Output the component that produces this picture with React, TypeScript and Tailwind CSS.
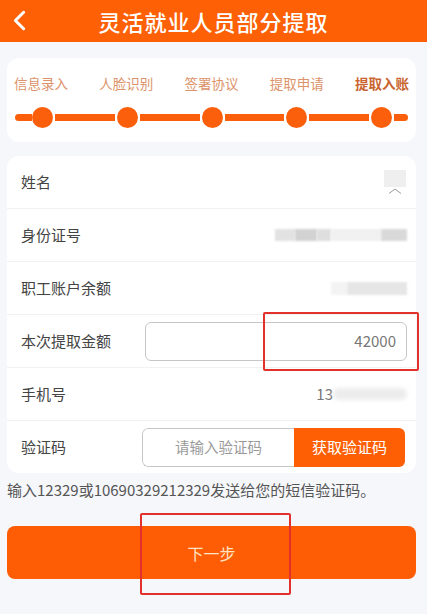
import { ChevronLeft } from 'lucide-react';

const STEPS = ['信息录入', '人脸识别', '签署协议', '提取申请', '提取入账'];

export default function App() {
  return (
    <div
      className="relative min-h-[614px] w-[427px] bg-[#f6f7fb] pb-[20px]"
      style={{ fontFamily: '"Noto Sans CJK SC", "Noto Sans", sans-serif' }}
    >
      {/* Header */}
      <div className="relative flex h-[42px] items-center justify-center bg-[#fe6005]">
        <ChevronLeft
          className="absolute left-[3px] top-[4px] h-[33px] w-[33px] text-white"
          strokeWidth={2.2}
        />
        <h1 className="text-[22px] font-medium leading-none tracking-[1px] text-white">
          灵活就业人员部分提取
        </h1>
      </div>

      {/* Steps */}
      <div className="mx-[7px] mt-[16px] h-[84px] w-[409px] rounded-xl bg-white pt-[14px]">
        <div className="flex justify-between px-[7px]">
          {STEPS.map((s, i) => (
            <span
              key={s}
              className={
                i === STEPS.length - 1
                  ? 'text-[13.5px] font-bold leading-[22px] text-[#c9652f]'
                  : 'text-[13.5px] leading-[22px] text-[#dc936a]'
              }
            >
              {s}
            </span>
          ))}
        </div>
        <div className="mt-[13px] flex items-center px-[8px]">
          <div className="h-[7px] w-[17px] rounded-l-full bg-[#fb5f0b]" />
          {STEPS.map((s, i) => (
            <div key={s} className={i < STEPS.length - 1 ? 'flex flex-1 items-center' : 'flex items-center'}>
              <div className="h-[21px] w-[21px] shrink-0 rounded-full bg-[#fb5f0b]" />
              {i < STEPS.length - 1 && <div className="mx-[2px] h-[7px] flex-1 bg-[#fb5f0b]" />}
            </div>
          ))}
          <div className="ml-[2px] h-[7px] w-[14px] rounded-r-full bg-[#fb5f0b]" />
        </div>
      </div>

      {/* Info card */}
      <div className="mx-[7px] mt-[14px] w-[409px] rounded-xl bg-white text-[15px] text-[#444]">
        <Row label="姓名">
          <div className="flex flex-col items-center pr-[1px]">
            <div className="h-[17px] w-[22px] bg-[#efefef] blur-[0.5px]" />
            <svg width="14" height="6" viewBox="0 0 14 6" className="mt-[1px]">
              <path d="M1 5.5 L7 1 L13 5.5" fill="none" stroke="#999" strokeWidth="1" />
            </svg>
          </div>
        </Row>
        <Row label="身份证号">
          <div className="flex h-[16px] items-center gap-0">
            <div className="h-[12px] w-[20px] bg-[#e2e2e2] blur-[1px]" />
            <div className="h-[12px] w-[22px] bg-[#d2d2d2] blur-[1px]" />
            <div className="h-[12px] w-[14px] bg-[#dedede] blur-[1px]" />
            <div className="h-[12px] w-[50px] bg-[#f0f0f0] blur-[1px]" />
            <div className="h-[12px] w-[26px] bg-[#d9d9d9] blur-[1px]" />
          </div>
        </Row>
        <Row label="职工账户余额">
          <div className="flex h-[16px] items-center">
            <div className="h-[13px] w-[16px] bg-[#f3f3f3] blur-[1px]" />
            <div className="h-[13px] w-[60px] bg-[#e6e6e6] blur-[1px]" />
          </div>
        </Row>
        <Row label="本次提取金额">
          <div className="flex h-[39px] w-[262px] items-center justify-end rounded-md border border-[#c6c6c6] pr-[10px] text-[15px] text-[#777]">
            42000
          </div>
        </Row>
        <Row label="手机号">
          <div className="flex items-center text-[15px] text-[#777]">
            <span>13</span>
            <div className="h-[12px] w-[74px] rounded-full bg-[#ececec] blur-[2px]" />
          </div>
        </Row>
        <Row label="验证码" last>
          <div className="flex h-[39px] w-[263px] overflow-hidden rounded-md">
            <div className="flex flex-1 items-center justify-center rounded-l-md border border-r-0 border-[#c6c6c6] text-[14.5px] text-[#9a9a9a]">
              请输入验证码
            </div>
            <button className="w-[111px] bg-[#fe5f05] text-[15px] text-white">获取验证码</button>
          </div>
        </Row>
      </div>

      <p className="mt-[7px] px-[7px] text-[15px] leading-[20px] text-[#555]">
        输入12329或10690329212329发送给您的短信验证码。
      </p>

      <button className="mx-[7px] mt-[26px] flex h-[53px] w-[409px] items-center justify-center rounded-lg bg-[#fe5d05] text-[16px] text-[#ffe3c2]">
        下一步
      </button>

      {/* Red annotation boxes */}
      <div className="pointer-events-none absolute left-[263px] top-[312px] h-[59px] w-[156px] rounded-[2px] border-[2px] border-[#e2312b]" />
      <div className="pointer-events-none absolute left-[140px] top-[513px] h-[82px] w-[151px] rounded-[2px] border-[2px] border-[#e2312b]" />
    </div>
  );
}

function Row({ label, children, last }: { label: string; children: React.ReactNode; last?: boolean }) {
  return (
    <div
      className={
        last
          ? 'flex h-[52px] items-center justify-between pl-[14px] pr-[11px]'
          : 'flex h-[53px] items-center justify-between border-b border-[#f1f1f1] pl-[14px] pr-[9px]'
      }
    >
      <span>{label}</span>
      {children}
    </div>
  );
}
